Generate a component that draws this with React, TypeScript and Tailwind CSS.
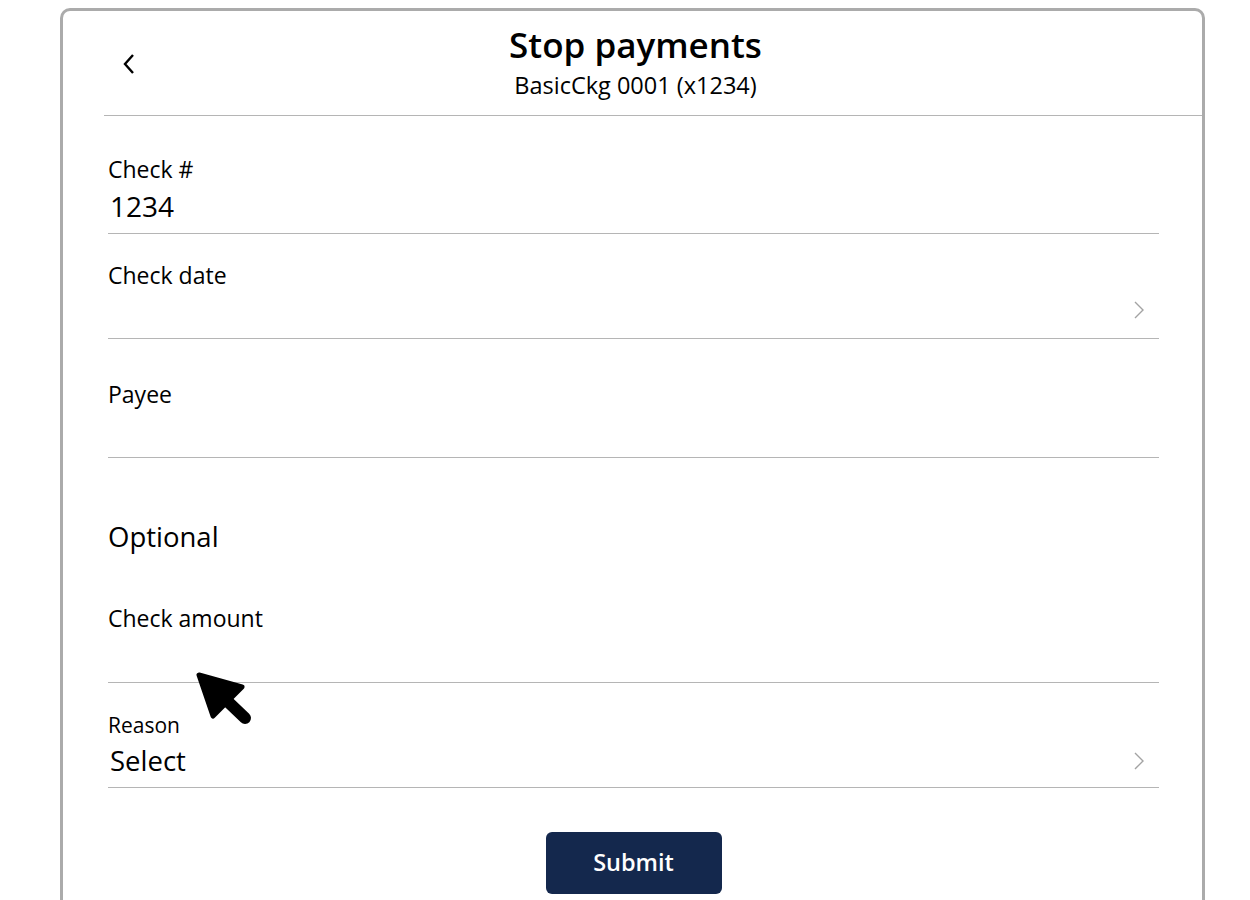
import React from 'react'

const font = { fontFamily: '"Open Sans", "Noto Sans", sans-serif' }

function ChevronRight() {
  return (
    <svg width="12" height="20" viewBox="0 0 12 20" fill="none" className="mr-[14px]">
      <path d="M2 2 L10 10 L2 18" stroke="#a3a3a3" strokeWidth="1.4" />
    </svg>
  )
}

function Cursor() {
  return (
    <svg width="62" height="60" viewBox="0 0 62 60" className="absolute left-[195px] top-[670px]">
      <path d="M4 5 L47 17 L18 46 Z" fill="#000" stroke="#000" strokeWidth="5" strokeLinejoin="round" />
      <path d="M28 27 L50 48" stroke="#000" strokeWidth="12" strokeLinecap="round" />
    </svg>
  )
}

export default function App() {
  return (
    <div className="relative w-[1250px] h-[900px] overflow-hidden bg-white text-black" style={font}>
      <div className="ml-[60px] mt-[8px] w-[1145px] h-[900px] border-[3px] border-b-0 border-[#ababab] rounded-t-[10px]">
        {/* header */}
        <div className="ml-[41px] h-[105px] border-b border-[#b5b5b5] flex items-start">
          <div className="w-0 pt-[42px] pl-[18px]">
            <svg width="14" height="22" viewBox="0 0 14 22" fill="none">
              <path d="M11 2 L3 11 L11 20" stroke="#000" strokeWidth="2.4" />
            </svg>
          </div>
          <div className="flex-1 flex flex-col items-center pt-[11px] pr-[53px]">
            <div className="text-[35px] leading-[46px] font-semibold">Stop payments</div>
            <div className="text-[23.5px] leading-[30px] mt-[2px]">BasicCkg 0001 (x1234)</div>
          </div>
        </div>

        {/* form */}
        <div className="ml-[45px] w-[1051px]">
          <div className="h-[118px] border-b border-[#b5b5b5] pt-[40px]">
            <div className="text-[23px] leading-[26px]">Check #</div>
            <div className="text-[28px] leading-[32px] mt-[8px] ml-[2px]">1234</div>
          </div>

          <div className="h-[105px] border-b border-[#b5b5b5] pt-[28px]">
            <div className="text-[23px] leading-[26px]">Check date</div>
            <div className="flex justify-end mt-[12px]">
              <ChevronRight />
            </div>
          </div>

          <div className="h-[119px] border-b border-[#b5b5b5] pt-[42px]">
            <div className="text-[23px] leading-[26px]">Payee</div>
          </div>

          <div className="text-[27.5px] leading-[32px] mt-[63px]">Optional</div>

          <div className="h-[130px] border-b border-[#b5b5b5] pt-[52px]">
            <div className="text-[23px] leading-[26px]">Check amount</div>
          </div>

          <div className="h-[105px] border-b border-[#b5b5b5] pt-[29px]">
            <div className="text-[21px] leading-[26px]">Reason</div>
            <div className="flex items-center justify-between mt-[7px]">
              <div className="text-[27.5px] leading-[32px] ml-[2px]">Select</div>
              <ChevronRight />
            </div>
          </div>
        </div>

        <div className="flex justify-center mt-[44px] pl-[2px]">
          <button className="w-[176px] h-[62px] rounded-[6px] bg-[#14284d] text-white text-[23.5px] font-semibold">
            Submit
          </button>
        </div>
      </div>
      <Cursor />
    </div>
  )
}
